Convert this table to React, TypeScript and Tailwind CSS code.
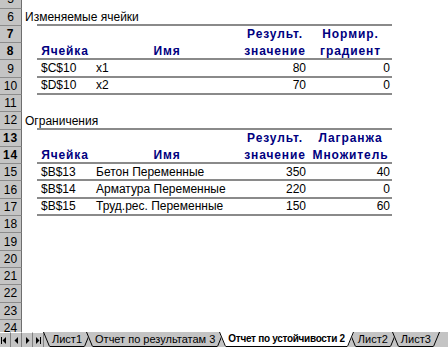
import React from "react";

type Row =
  | { n: number; kind: "blank" }
  | { n: number; kind: "title"; text: string; line?: boolean }
  | { n: number; kind: "head"; cells: [string, string, string, string]; line?: boolean }
  | { n: number; kind: "data"; cells: [string, string, string, string]; line?: boolean };

const rows: Row[] = [
  { n: 5, kind: "blank" },
  { n: 6, kind: "title", text: "Изменяемые ячейки", line: true },
  { n: 7, kind: "head", cells: ["", "", "Результ.", "Нормир."] },
  { n: 8, kind: "head", cells: ["Ячейка", "Имя", "значение", "градиент"], line: true },
  { n: 9, kind: "data", cells: ["$C$10", "x1", "80", "0"], line: true },
  { n: 10, kind: "data", cells: ["$D$10", "x2", "70", "0"], line: true },
  { n: 11, kind: "blank" },
  { n: 12, kind: "title", text: "Ограничения", line: true },
  { n: 13, kind: "head", cells: ["", "", "Результ.", "Лагранжа"] },
  { n: 14, kind: "head", cells: ["Ячейка", "Имя", "значение", "Множитель"], line: true },
  { n: 15, kind: "data", cells: ["$B$13", "Бетон Переменные", "350", "40"], line: true },
  { n: 16, kind: "data", cells: ["$B$14", "Арматура Переменные", "220", "0"], line: true },
  { n: 17, kind: "data", cells: ["$B$15", "Труд.рес. Переменные", "150", "60"], line: true },
  { n: 18, kind: "blank" },
  { n: 19, kind: "blank" },
  { n: 20, kind: "blank" },
  { n: 21, kind: "blank" },
  { n: 22, kind: "blank" },
  { n: 23, kind: "blank" },
  { n: 24, kind: "blank" },
];

function SheetRow({ row }: { row: Row }) {
  const line = "line" in row && row.line ? "border-b-2 border-[#8a8a8a]" : "";
  return (
    <div className="flex h-[17.3px]">
      <div className="flex w-[22px] shrink-0 items-center justify-center border-r border-b border-r-[#6e6e6e] border-b-[#8c8c8c] bg-[#c4c4c4] text-[12px] leading-none text-black">
        {row.n}
      </div>
      <div className="w-[15px] shrink-0 whitespace-nowrap">
        {row.kind === "title" ? (
          <div className="flex h-full items-center pl-[3px] text-[12px] text-black">{row.text}</div>
        ) : null}
      </div>
      <div className={`flex w-[355px] shrink-0 items-center ${line}`}>
        {row.kind === "head" ? (
          <>
            <div className="w-[56px] text-center">{row.cells[0]}</div>
            <div className="w-[148px] text-center">{row.cells[1]}</div>
            <div className="w-[68px] text-center">{row.cells[2]}</div>
            <div className="w-[83px] text-center">{row.cells[3]}</div>
          </>
        ) : null}
        {row.kind === "data" ? (
          <>
            <div className="w-[56px] pl-[4px]">{row.cells[0]}</div>
            <div className="w-[148px] whitespace-nowrap pl-[3px]">{row.cells[1]}</div>
            <div className="w-[68px] pr-[3px] text-right">{row.cells[2]}</div>
            <div className="w-[83px] pr-[2px] text-right">{row.cells[3]}</div>
          </>
        ) : null}
      </div>
    </div>
  );
}

function NavButton({ children }: { children: React.ReactNode }) {
  return (
    <div className="flex h-[15px] w-[11px] items-center justify-center border-r border-t border-r-[#808080] border-t-white">
      {children}
    </div>
  );
}

function Tab({ label, active }: { label: string; active?: boolean }) {
  const fill = active ? "#ffffff" : "#c4c4c4";
  return (
    <div className={`relative -ml-[5px] flex h-[15px] items-center ${active ? "z-10" : ""}`}>
      <svg width="7" height="15" className="shrink-0">
        <polygon points="0,0 7,0 7,15 6,15" fill={fill} />
        <line x1="0.5" y1="0" x2="6.5" y2="14.5" stroke="#000" strokeWidth="1" />
      </svg>
      <span
        className={`flex h-full items-center whitespace-nowrap border-b border-black px-[2px] leading-none ${
          active ? "bg-white text-[10px] font-bold tracking-[-0.3px]" : "bg-[#c4c4c4] text-[11px]"
        }`}
      >
        {label}
      </span>
      <svg width="7" height="15" className="shrink-0">
        <polygon points="0,0 7,0 1,15 0,15" fill={fill} />
        <line x1="6.5" y1="0" x2="0.5" y2="14.5" stroke="#000" strokeWidth="1" />
      </svg>
    </div>
  );
}

export default function App() {
  return (
    <div className="flex h-[347px] w-[448px] flex-col overflow-hidden bg-white font-['Liberation_Sans',Arial,sans-serif] text-[12px] text-black">
      <div className="relative flex-1 overflow-hidden">
        <div className="-mt-[8.8px]">
          {rows.map((row) => (
            <div
              key={row.n}
              className={row.kind === "head" ? "font-bold tracking-[0.9px] text-[#000080]" : ""}
            >
              <SheetRow row={row} />
            </div>
          ))}
        </div>
      </div>
      <div className="flex h-[15px] shrink-0 items-center bg-[#c4c4c4]">
        <div className="flex">
          <NavButton>
            <svg width="8" height="7" viewBox="0 0 8 7">
              <rect x="0" y="0" width="1" height="7" fill="#000" />
              <polygon points="5,0 5,7 1.5,3.5" fill="#000" />
            </svg>
          </NavButton>
          <NavButton>
            <svg width="5" height="7" viewBox="0 0 5 7">
              <polygon points="4,0 4,7 0.5,3.5" fill="#000" />
            </svg>
          </NavButton>
          <NavButton>
            <svg width="5" height="7" viewBox="0 0 5 7">
              <polygon points="1,0 1,7 4.5,3.5" fill="#000" />
            </svg>
          </NavButton>
          <NavButton>
            <svg width="8" height="7" viewBox="0 0 8 7">
              <polygon points="2,0 2,7 5.5,3.5" fill="#000" />
              <rect x="6" y="0" width="1" height="7" fill="#000" />
            </svg>
          </NavButton>
        </div>
        <div className="ml-[4px] flex">
          <Tab label="Лист1" />
          <Tab label="Отчет по результатам 3" />
          <Tab label="Отчет по устойчивости 2" active />
          <Tab label="Лист2" />
          <Tab label="Лист3" />
        </div>
      </div>
    </div>
  );
}
